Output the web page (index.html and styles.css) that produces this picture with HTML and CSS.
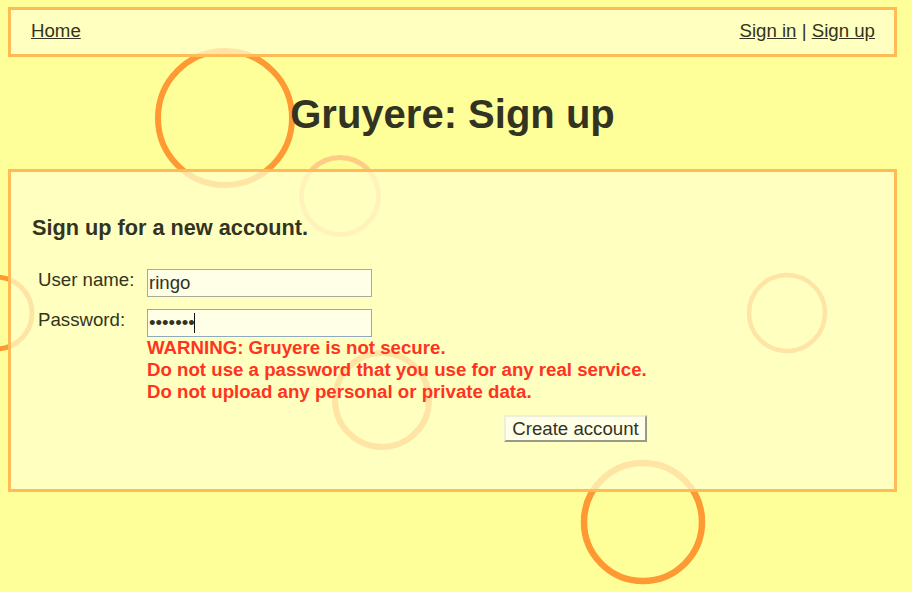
FILE: index.html
```html
<!DOCTYPE html>
<html>
<head>
<meta charset="utf-8">
<title>Gruyere: Sign up</title>
<link rel="stylesheet" href="styles.css">
</head>
<body>
<svg class="holes" width="912" height="592" viewBox="0 0 912 592" aria-hidden="true">
  <circle cx="225" cy="118" r="67" fill="none" stroke="#ff9933" stroke-width="6"/>
  <circle cx="340" cy="196" r="38.5" fill="none" stroke="#ffcc88" stroke-width="5"/>
  <circle cx="-4" cy="313" r="36" fill="none" stroke="#ff9933" stroke-width="5"/>
  <circle cx="787" cy="313" r="38" fill="none" stroke="#ff9933" stroke-width="4.5"/>
  <circle cx="382" cy="400" r="47" fill="none" stroke="#ff9933" stroke-width="6"/>
  <circle cx="643" cy="522" r="59" fill="none" stroke="#ff9933" stroke-width="6.5"/>
</svg>

<div class="menu">
  <a href="#">Home</a>
  <span class="right"><a href="#">Sign in</a> | <a href="#">Sign up</a></span>
</div>

<h1 class="title">Gruyere: Sign up</h1>

<div class="content">
  <h2 class="subtitle">Sign up for a new account.</h2>
  <form class="form">
    <label class="label" for="uid">User name:</label>
    <div class="field">
      <input class="input" id="uid" type="text" value="ringo">
    </div>
    <label class="label" for="pw">Password:</label>
    <div class="field">
      <div class="pwwrap">
        <input class="input input-focus" id="pw" type="password" value="1234567">
        <span class="caret"></span>
      </div>
      <div class="warning">WARNING: Gruyere is not secure.<br>Do not use a password that you use for any real service.<br>Do not upload any personal or private data.</div>
      <div class="actions"><button class="button" type="button">Create account</button></div>
    </div>
  </form>
</div>
</body>
</html>
```
FILE: styles.css
```css
html, body {
  margin: 0;
  padding: 0;
}
body {
  background: #ffff99;
  color: #333322;
  font-family: "Liberation Sans", Arial, sans-serif;
  font-size: 18.67px;
  width: 912px;
  height: 592px;
  position: relative;
  overflow: hidden;
}
.holes {
  position: absolute;
  left: 0;
  top: 0;
  z-index: 0;
}
.menu, .title, .content {
  position: relative;
  z-index: 1;
}
.menu {
  margin: 7px 15px 0 8px;
  border: 3px solid #ffbb55;
  background: rgba(255, 255, 204, 0.75);
  height: 44px;
  box-sizing: content-box;
  padding: 0 19px 0 20px;
  display: flex;
  justify-content: space-between;
  align-items: flex-start;
}
.menu > a, .menu .right {
  padding-top: 10px;
  line-height: 21px;
}
.menu a {
  color: #333322;
  text-decoration: underline;
}
.title {
  margin: 34px 15px 0 8px;
  text-align: center;
  font-size: 40px;
  line-height: 46px;
  font-weight: bold;
  height: 46px;
}
.content {
  margin: 32px 15px 0 8px;
  border: 3px solid #ffbb55;
  background: rgba(255, 255, 204, 0.75);
  padding: 44px 0 47px 21px;
}
.subtitle {
  margin: 0 0 30px 0;
  font-size: 21.7px;
  line-height: 23px;
  font-weight: bold;
}
.form {
  display: grid;
  grid-template-columns: 109px auto;
  row-gap: 12px;
  margin-left: 6px;
  justify-content: start;
  align-items: start;
}
.label {
  line-height: 21px;
}
.field {
  display: flex;
  flex-direction: column;
  align-items: flex-start;
}
.pwwrap {
  position: relative;
}
.input {
  box-sizing: border-box;
  width: 225px;
  height: 28px;
  margin: 0;
  padding: 0 1px;
  border: 1px solid #aaaa99;
  background: #ffffe8;
  color: #333322;
  font-family: "Liberation Sans", Arial, sans-serif;
  font-size: 18.67px;
  outline: none;
  display: block;
}
.input-focus {
  border-color: #8fa9c3;
}
.caret {
  position: absolute;
  left: 47px;
  top: 4px;
  width: 1px;
  height: 20px;
  background: #111111;
}
.warning {
  color: #ff3322;
  font-weight: bold;
  line-height: 22px;
  white-space: nowrap;
}
.actions {
  align-self: stretch;
  display: flex;
  justify-content: flex-end;
  margin-top: 12px;
}
.button {
  box-sizing: border-box;
  height: 27px;
  margin: 0;
  padding: 0 6px;
  font-family: "Liberation Sans", Arial, sans-serif;
  font-size: 18.67px;
  line-height: 21px;
  color: #333322;
  background: #ffffe8;
  border: 2px solid;
  border-color: #eeeedd #999988 #999988 #eeeedd;
  border-radius: 0;
}
```
